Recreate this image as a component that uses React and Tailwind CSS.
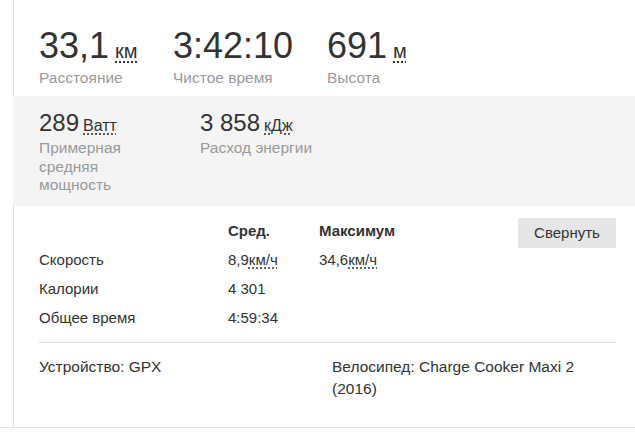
import React from 'react';

const Unit = ({ children, className = '' }) => (
    <span className={`underline decoration-dotted underline-offset-[3px] ${className}`}>{children}</span>
);

const TopStat = ({ value, unit, label, width }) => (
    <div className={width}>
        <div className="text-[36px] leading-[40px] text-[#333]">
            {value}
            <Unit className="ml-[6px] text-[20px]">{unit}</Unit>
        </div>
        <div className="mt-[-2px] text-[15.5px] leading-[18px] text-[#9a9a9a]">{label}</div>
    </div>
);

const MidStat = ({ value, unit, label, width }) => (
    <div className={width}>
        <div className="text-[24px] leading-[28px] text-[#333]">
            {value}
            <Unit className="ml-[4px] text-[16px]">{unit}</Unit>
        </div>
        <div className="mt-[-1px] text-[15.5px] leading-[18.5px] text-[#9a9a9a]">{label}</div>
    </div>
);

const rows = [
    ['Скорость', <>8,9<Unit>км/ч</Unit></>, <>34,6<Unit>км/ч</Unit></>],
    ['Калории', '4 301', ''],
    ['Общее время', '4:59:34', ''],
];

export default function App() {
    return (
        <div className="w-[635px] h-[446px] bg-white font-['Liberation_Sans',Arial,sans-serif]">
            <div className="h-[428px] border-b border-[#e3e3e3] pl-[13px] flex flex-col">
                {/* Top stats */}
                <div className="h-[96px] border-l border-[#e3e3e3] pl-[25px] pt-[26px] flex">
                    <TopStat value="33,1" unit="км" label="Расстояние" width="w-[134px]" />
                    <TopStat value="3:42:10" unit="" label="Чистое время" width="w-[154px]" />
                    <TopStat value="691" unit="м" label="Высота" width="w-[150px]" />
                </div>

                {/* Power / energy */}
                <div className="h-[110px] bg-[#f4f4f4] pl-[26px] pt-[13px] flex">
                    <MidStat value="289" unit="Ватт" label="Примерная средняя мощность" width="w-[161px] pr-[50px]" />
                    <MidStat value="3 858" unit="кДж" label="Расход энергии" width="w-[200px]" />
                </div>

                {/* Details */}
                <div className="flex-1 border-l border-[#e3e3e3] pl-[25px] pr-[19px] text-[15px] text-[#333]">
                    <div className="flex items-start pt-[10px]">
                        <div className="flex-1 grid grid-cols-[189px_91px_1fr] auto-rows-[29px] leading-[29px]">
                            <div></div>
                            <div className="font-bold">Сред.</div>
                            <div className="font-bold">Максимум</div>
                            {rows.map(([label, avg, max]) => (
                                <React.Fragment key={label}>
                                    <div>{label}</div>
                                    <div>{avg}</div>
                                    <div>{max}</div>
                                </React.Fragment>
                            ))}
                        </div>
                        <button className="mt-[2px] w-[98px] h-[30px] bg-[#e6e6e6] text-[15px] text-[#333]">Свернуть</button>
                    </div>

                    <div className="mt-[10px] border-t border-[#dcdcdc]"></div>

                    <div className="mt-[13px] flex leading-[22px] text-[15.5px]">
                        <div className="w-[293px]">Устройство: GPX</div>
                        <div className="w-[265px]">Велосипед: Charge Cooker Maxi 2 (2016)</div>
                    </div>
                </div>
            </div>
        </div>
    );
}
